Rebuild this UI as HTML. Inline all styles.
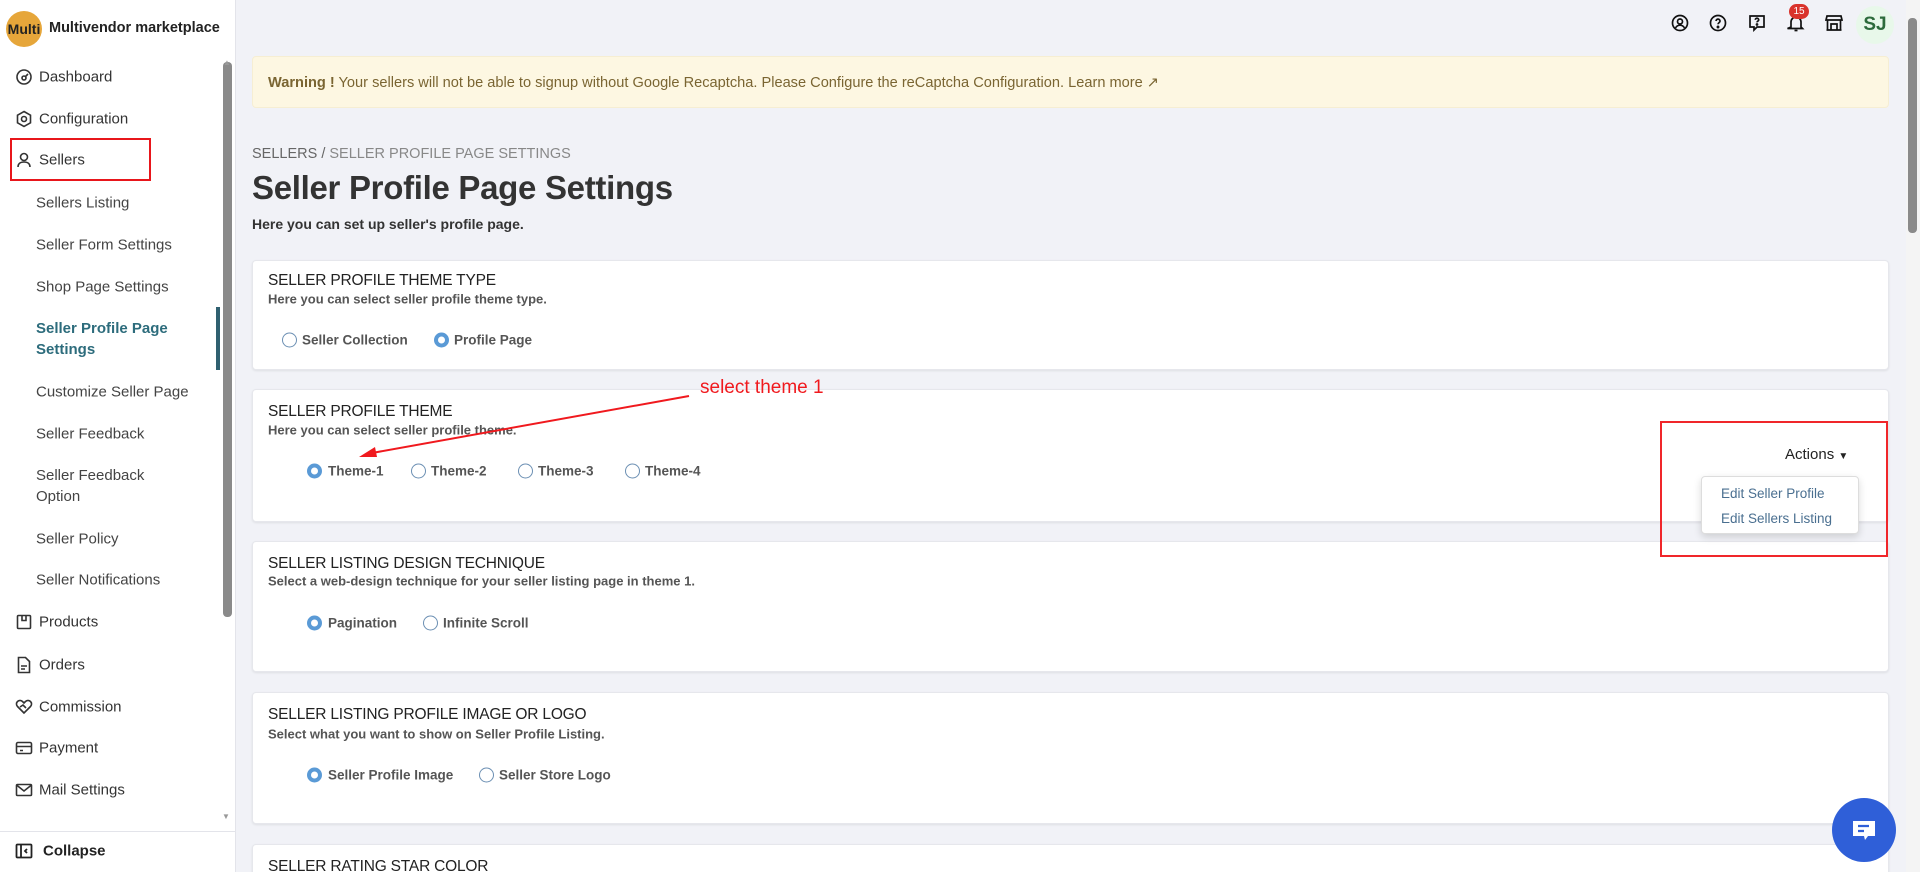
<!DOCTYPE html>
<html style="width:1920px;height:872px;overflow:hidden"><head><meta charset="utf-8"><style>
*{box-sizing:border-box;margin:0;padding:0}
body{width:1920px;height:872px;overflow:hidden;background:#f1f2f7;font-family:"Liberation Sans",sans-serif;color:#333}
#w{position:relative;width:1920px;height:872px;overflow:hidden}
.sb{position:absolute;left:0;top:0;width:236px;height:872px;background:#fff;border-right:1px solid #e3e4ea}
.abs{position:absolute}
.logo{left:6px;top:11px;width:36px;height:36px;border-radius:50%;background:#e6a63a;font-weight:bold;font-size:14px;line-height:36px;text-align:center;color:#222}
.brand{left:49px;top:20px;font-size:14.5px;font-weight:bold;color:#222}
.it{position:absolute;left:39px;font-size:15px;color:#333;transform:translateY(-50%)}
.sub{position:absolute;left:36px;font-size:15px;color:#444;transform:translateY(-50%);line-height:21px}
.ic{position:absolute;left:15px;transform:translateY(-50%)}
.card{position:absolute;left:252px;width:1637px;background:#fff;border-radius:4px;box-shadow:0 1px 2px rgba(0,0,0,.08);border:1px solid #e6e7ec}
.ct{position:absolute;left:15px;font-size:15.5px;color:#222;transform:translateY(-50%);letter-spacing:-.2px}
.cs{position:absolute;left:15px;font-size:13px;font-weight:bold;color:#555;transform:translateY(-50%)}
.r{position:absolute;width:15px;height:15px;border-radius:50%;border:1.5px solid #6b8fb3;transform:translateY(-50%)}
.r.on{border:4px solid #5a9ad6;background:#fff}
.rl{position:absolute;font-size:13.5px;font-weight:bold;color:#555;transform:translateY(-50%)}
.ti{position:absolute;top:14px}
</style></head><body><div id="w">
<div class="sb">
<div class="abs logo">Multi</div>
<div class="abs brand">Multivendor marketplace</div>
<div class="abs" style="left:223px;top:62px;width:9px;height:555px;background:#8a8a8a;border-radius:4px"></div>
<div class="abs" style="left:223px;top:58px;font-size:8px;color:#999">▲</div>
<div class="abs" style="left:222px;top:812px;font-size:8px;color:#999">▼</div>
<svg class="ic" style="top:77px" width="18" height="18" viewBox="0 0 18 18" fill="none" stroke="#333" stroke-width="1.6"><circle cx="9" cy="9" r="7"/><circle cx="9" cy="10" r="2"/><path d="M10 9l3-3"/></svg>
<div class="it" style="top:77px">Dashboard</div>
<svg class="ic" style="top:119px" width="18" height="18" viewBox="0 0 18 18" fill="none" stroke="#333" stroke-width="1.6"><path d="M9 1.5l6.5 3.7v7.6L9 16.5 2.5 12.8V5.2z"/><circle cx="9" cy="9" r="2.5"/></svg>
<div class="it" style="top:119px">Configuration</div>
<div class="abs" style="left:10px;top:138px;width:141px;height:43px;border:2px solid #e8161b"></div>
<svg class="ic" style="top:160px" width="18" height="18" viewBox="0 0 18 18" fill="none" stroke="#333" stroke-width="1.6"><circle cx="9" cy="6" r="3.5"/><path d="M3 16c0-3.5 2.7-5 6-5s6 1.5 6 5"/></svg>
<div class="it" style="top:160px">Sellers</div>
<div class="sub" style="top:203px">Sellers Listing</div>
<div class="sub" style="top:245px">Seller Form Settings</div>
<div class="sub" style="top:287px">Shop Page Settings</div>
<div class="sub" style="top:339px;color:#2d6c7c;font-weight:bold">Seller Profile Page<br>Settings</div>
<div class="abs" style="left:216px;top:307px;width:4px;height:63px;background:#2f6070"></div>
<div class="sub" style="top:392px">Customize Seller Page</div>
<div class="sub" style="top:434px">Seller Feedback</div>
<div class="sub" style="top:486px">Seller Feedback<br>Option</div>
<div class="sub" style="top:539px">Seller Policy</div>
<div class="sub" style="top:580px">Seller Notifications</div>
<svg class="ic" style="top:622px" width="18" height="18" viewBox="0 0 18 18" fill="none" stroke="#333" stroke-width="1.6"><rect x="2.5" y="2.5" width="13" height="13" rx="1"/><path d="M7 2.5v5h4v-5"/></svg>
<div class="it" style="top:622px">Products</div>
<svg class="ic" style="top:665px" width="18" height="18" viewBox="0 0 18 18" fill="none" stroke="#333" stroke-width="1.6"><path d="M3.5 1.5h7l4 4v11h-11z"/><path d="M6 10h6M6 13h4"/></svg>
<div class="it" style="top:665px">Orders</div>
<svg class="ic" style="top:707px" width="18" height="18" viewBox="0 0 18 18" fill="none" stroke="#333" stroke-width="1.6"><path d="M9 15L2.5 8.5a3.5 3.5 0 015-5L9 5l1.5-1.5a3.5 3.5 0 015 5z"/><path d="M5 9l3-2 3 3"/></svg>
<div class="it" style="top:707px">Commission</div>
<svg class="ic" style="top:748px" width="18" height="18" viewBox="0 0 18 18" fill="none" stroke="#333" stroke-width="1.6"><rect x="1.5" y="3.5" width="15" height="11" rx="1.5"/><path d="M1.5 7.5h15M5 11.5h3"/></svg>
<div class="it" style="top:748px">Payment</div>
<svg class="ic" style="top:790px" width="18" height="18" viewBox="0 0 18 18" fill="none" stroke="#333" stroke-width="1.6"><rect x="1.5" y="3.5" width="15" height="11" rx="1"/><path d="M1.5 4l7.5 6 7.5-6"/></svg>
<div class="it" style="top:790px">Mail Settings</div>
<div class="abs" style="left:0;top:831px;width:236px;height:1px;background:#e3e4ea"></div>
<svg class="ic" style="top:851px" width="18" height="18" viewBox="0 0 18 18" fill="none" stroke="#222" stroke-width="1.8"><rect x="1.5" y="2.5" width="15" height="13" rx="1"/><path d="M6 2.5v13M12 7l-2 2 2 2"/></svg>
<div class="it" style="top:851px;left:43px;font-weight:bold;color:#222">Collapse</div>
</div>

<svg class="ti" style="left:1671px" width="18" height="18" viewBox="0 0 18 18" fill="none" stroke="#111" stroke-width="1.7"><circle cx="9" cy="9" r="7.5"/><circle cx="9" cy="7.5" r="2.5"/><path d="M4.5 14c1-2 2.5-2.8 4.5-2.8s3.5.8 4.5 2.8"/></svg>
<svg class="ti" style="left:1709px" width="18" height="18" viewBox="0 0 18 18" fill="none" stroke="#111" stroke-width="1.7"><circle cx="9" cy="9" r="7.5"/><path d="M7 7a2 2 0 114 .3c0 1.2-2 1.5-2 3"/><circle cx="9" cy="13" r=".6" fill="#111"/></svg>
<svg class="ti" style="left:1748px" width="18" height="18" viewBox="0 0 18 18" fill="none" stroke="#111" stroke-width="1.7"><path d="M2 2h14v11H9l-3 3v-3H2z"/><path d="M7.3 5.8a1.7 1.7 0 113.4.2c0 1-1.7 1.2-1.7 2.4"/><circle cx="9" cy="10.5" r=".5" fill="#111"/></svg>
<svg class="ti" style="left:1787px" width="18" height="18" viewBox="0 0 18 18" fill="none" stroke="#111" stroke-width="1.7"><path d="M4 13V8a5 5 0 0110 0v5l1.5 1.5h-15z"/><path d="M7.5 16.5h3"/></svg>
<div class="abs" style="left:1789px;top:4px;width:20px;height:15px;border-radius:8px;background:#d9332c;color:#fff;font-size:10px;text-align:center;line-height:15px">15</div>
<svg class="ti" style="left:1825px" width="18" height="18" viewBox="0 0 18 18" fill="none" stroke="#111" stroke-width="1.7"><path d="M2 2h14l1 4H1z"/><path d="M2.5 6v10h13V6M6 16v-6h6v6M1.5 16h15"/></svg>
<div class="abs" style="left:1856px;top:6px;width:38px;height:38px;border-radius:50%;background:#e8f8ea;color:#2d6b3c;font-weight:bold;font-size:19px;text-align:center;line-height:38px">SJ</div>
<div class="abs" style="left:1906px;top:0;width:14px;height:872px;background:#f4f4f4"></div>
<div class="abs" style="left:1908px;top:18px;width:9px;height:215px;background:#8a8a8a;border-radius:4px"></div>

<div class="abs" style="left:252px;top:56px;width:1637px;height:52px;background:#fdf7e2;border-radius:4px;border:1px solid #f6eed3"></div>
<div class="abs" style="left:268px;top:74px;font-size:14.6px;color:#7a6532"><b>Warning !</b> Your sellers will not be able to signup without Google Recaptcha. Please Configure the reCaptcha Configuration. Learn more &#x2197;</div>

<div class="abs" style="left:252px;top:146px;font-size:14.5px;color:#666">SELLERS / <span style="color:#888">SELLER PROFILE PAGE SETTINGS</span></div>
<div class="abs" style="left:252px;top:169px;font-size:33px;font-weight:bold;color:#333;letter-spacing:-.3px">Seller Profile Page Settings</div>
<div class="abs" style="left:252px;top:216px;font-size:14px;font-weight:bold;color:#333">Here you can set up seller's profile page.</div>

<div class="card" style="top:260px;height:110px">
<div class="ct" style="top:20px">SELLER PROFILE THEME TYPE</div>
<div class="cs" style="top:38px">Here you can select seller profile theme type.</div>
<div class="r" style="left:29px;top:79px"></div><div class="rl" style="left:49px;top:79px">Seller Collection</div>
<div class="r on" style="left:181px;top:79px"></div><div class="rl" style="left:201px;top:79px">Profile Page</div>
</div>
<div class="card" style="top:389px;height:133px">
<div class="ct" style="top:22px">SELLER PROFILE THEME</div>
<div class="cs" style="top:40px">Here you can select seller profile theme.</div>
<div class="r on" style="left:54px;top:81px"></div><div class="rl" style="left:75px;top:81px">Theme-1</div>
<div class="r" style="left:158px;top:81px"></div><div class="rl" style="left:178px;top:81px">Theme-2</div>
<div class="r" style="left:265px;top:81px"></div><div class="rl" style="left:285px;top:81px">Theme-3</div>
<div class="r" style="left:372px;top:81px"></div><div class="rl" style="left:392px;top:81px">Theme-4</div>
</div>
<div class="card" style="top:541px;height:131px">
<div class="ct" style="top:22px">SELLER LISTING DESIGN TECHNIQUE</div>
<div class="cs" style="top:39px">Select a web-design technique for your seller listing page in theme 1.</div>
<div class="r on" style="left:54px;top:81px"></div><div class="rl" style="left:75px;top:81px">Pagination</div>
<div class="r" style="left:170px;top:81px"></div><div class="rl" style="left:190px;top:81px">Infinite Scroll</div>
</div>
<div class="card" style="top:692px;height:132px">
<div class="ct" style="top:22px">SELLER LISTING PROFILE IMAGE OR LOGO</div>
<div class="cs" style="top:41px">Select what you want to show on Seller Profile Listing.</div>
<div class="r on" style="left:54px;top:82px"></div><div class="rl" style="left:75px;top:82px">Seller Profile Image</div>
<div class="r" style="left:226px;top:82px"></div><div class="rl" style="left:246px;top:82px">Seller Store Logo</div>
</div>
<div class="card" style="top:844px;height:40px">
<div class="ct" style="top:22px">SELLER RATING STAR COLOR</div>
</div>

<div class="abs" style="left:1785px;top:446px;font-size:15px;color:#222">Actions <span style="font-size:10px">▼</span></div>
<div class="abs" style="left:1701px;top:476px;width:158px;height:58px;background:#fff;border:1px solid #ddd;border-radius:4px;box-shadow:0 3px 8px rgba(0,0,0,.15)"></div>
<div class="abs" style="left:1721px;top:486px;font-size:13.5px;color:#4a6f90">Edit Seller Profile</div>
<div class="abs" style="left:1721px;top:511px;font-size:13.5px;color:#4a6f90">Edit Sellers Listing</div>
<div class="abs" style="left:1660px;top:421px;width:228px;height:136px;border:2px solid #f0262a"></div>

<div class="abs" style="left:700px;top:377px;font-size:19px;color:#f0191e">select theme 1</div>
<svg class="abs" style="left:0;top:0" width="1920" height="872"><line x1="689" y1="396" x2="372" y2="453" stroke="#f0191e" stroke-width="2"/><path d="M359 457l16-10 2 10z" fill="#f0191e"/></svg>

<div class="abs" style="left:1832px;top:798px;width:64px;height:64px;border-radius:50%;background:#2f5fd8"></div>
<svg class="abs" style="left:1849px;top:816px" width="30" height="30" viewBox="0 0 30 30"><path d="M4 5h22v15H19l-3 4-1-4H4z" fill="#fff"/><path d="M9 10h11M9 15h6" stroke="#2f5fd8" stroke-width="2.2"/></svg>
</div></body></html>
